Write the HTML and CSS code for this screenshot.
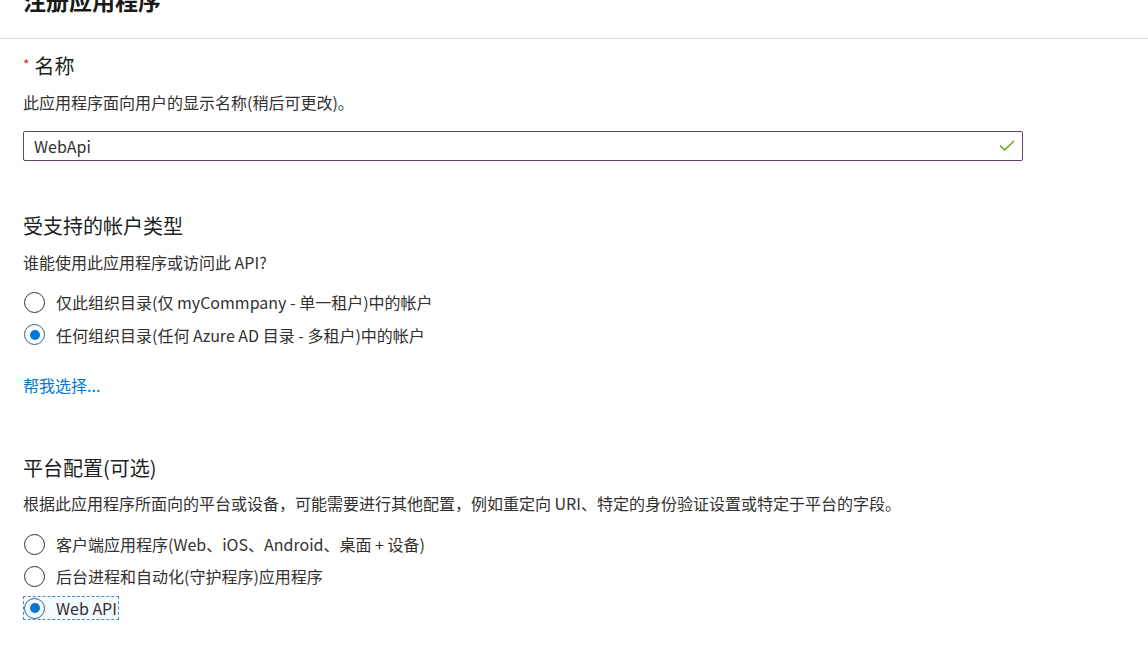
FILE: index.html
```html
<!DOCTYPE html>
<html lang="zh-CN">
<head>
<meta charset="utf-8">
<title>注册应用程序</title>
<link rel="stylesheet" href="styles.css">
</head>
<body>
<header class="header">
  <h1 class="title">注册应用程序</h1>
</header>
<main class="content">
  <section class="field">
    <h2 class="label"><span class="req">*</span>名称</h2>
    <p class="desc">此应用程序面向用户的显示名称(稍后可更改)。</p>
    <div class="input">
      <span class="input-text">WebApi</span>
      <svg class="check" width="16" height="12" viewBox="0 0 16 12"><path d="M1 5.5 L5.5 10 L15 1" fill="none" stroke="#57a300" stroke-width="1.3"/></svg>
    </div>
  </section>

  <section class="section accounts">
    <h2 class="heading">受支持的帐户类型</h2>
    <p class="desc">谁能使用此应用程序或访问此 API?</p>
    <div class="radios">
      <div class="radio"><span class="circle"></span><span class="rlabel">仅此组织目录(仅 myCommpany - 单一租户)中的帐户</span></div>
      <div class="radio"><span class="circle on"></span><span class="rlabel">任何组织目录(任何 Azure AD 目录 - 多租户)中的帐户</span></div>
    </div>
    <a class="link" href="#">帮我选择...</a>
  </section>

  <section class="section platform">
    <h2 class="heading">平台配置(可选)</h2>
    <p class="desc">根据此应用程序所面向的平台或设备，可能需要进行其他配置，例如重定向 URI、特定的身份验证设置或特定于平台的字段。</p>
    <div class="radios">
      <div class="radio"><span class="circle"></span><span class="rlabel">客户端应用程序(Web、iOS、Android、桌面 + 设备)</span></div>
      <div class="radio"><span class="circle"></span><span class="rlabel">后台进程和自动化(守护程序)应用程序</span></div>
      <div class="radio"><span class="focus"><span class="circle on"></span><span class="rlabel">Web API</span></span></div>
    </div>
  </section>
</main>
</body>
</html>
```

FILE: styles.css
```css
* { box-sizing: border-box; }
html, body { margin: 0; padding: 0; background: #fff; }
body {
  font-family: "Noto Sans CJK SC", "Noto Sans", sans-serif;
  color: #323130;
  overflow: hidden;
  height: 669px;
}
.header {
  height: 39px;
  border-bottom: 1px solid #e1dfdd;
  padding-left: 23px;
  overflow: hidden;
}
.title {
  margin: -14px 0 0 0;
  font-size: 23px;
  line-height: 28px;
  font-weight: 700;
  color: #1b1a19;
}
.content { padding-left: 23px; }
.label, .heading {
  margin: 0;
  font-size: 20px;
  line-height: 28px;
  font-weight: 400;
  color: #201f1e;
}
.label { margin-top: 13px; }
.req { color: #d13438; font-size: 14px; vertical-align: top; margin-right: 5px; position: relative; top: -2px; }
.desc {
  margin: 11px 0 0 0;
  font-size: 16px;
  line-height: 22px;
  color: #323130;
}
.input {
  margin-top: 18px;
  width: 1000px;
  height: 30px;
  border: 1px solid #6b3f6c;
  border-radius: 2px;
  display: flex;
  align-items: center;
  justify-content: space-between;
  padding: 0 7px 0 10px;
}
.input-text { font-size: 16px; color: #323130; }
.check { display: block; }
.section { margin-top: 51px; }
.radios { margin-top: 13px; display: flex; flex-direction: column; }
.radio {
  height: 32px;
  display: flex;
  align-items: center;
}
.accounts .radio:nth-child(2) { height: 33px; }
.platform .desc { margin-top: 10px; }
.platform .radios { margin-top: 14px; }
.circle {
  width: 21px;
  height: 21px;
  border: 1px solid #323130;
  border-radius: 50%;
  margin-left: 1px;
  display: flex;
  align-items: center;
  justify-content: center;
  flex: none;
}
.circle.on { border-color: #2a5f8f; }
.circle.on::after {
  content: "";
  width: 10px;
  height: 10px;
  border-radius: 50%;
  background: #0078d4;
}
.rlabel {
  margin-left: 11px;
  font-size: 16px;
  line-height: 22px;
  color: #323130;
  white-space: nowrap;
}
.focus {
  display: flex;
  align-items: center;
  height: 24px;
  border: 1px dashed #4a8ab8;
  background: #f5fafe;
  padding-right: 1px;
}
.focus .circle { margin-left: 0; }
.focus .rlabel { margin-left: 11px; }
.link {
  display: inline-block;
  margin-top: 23px;
  font-size: 16px;
  line-height: 22px;
  color: #0078d4;
  text-decoration: none;
}
.platform { margin-top: 57px; }
```
